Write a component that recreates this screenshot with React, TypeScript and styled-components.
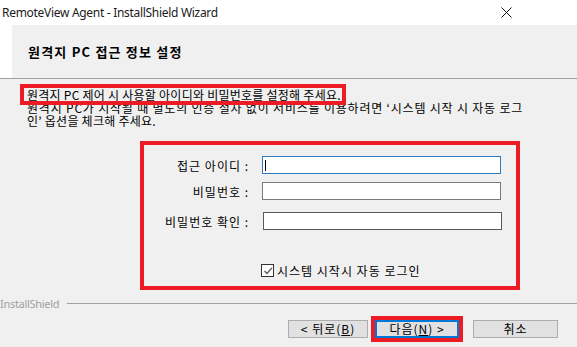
import React from "react";
import styled, { createGlobalStyle } from "styled-components";

const GlobalStyle = createGlobalStyle`
  html, body {
    margin: 0;
    padding: 0;
    width: 577px;
    height: 347px;
    overflow: hidden;
    background: #ffffff;
  }
  * {
    box-sizing: border-box;
  }
`;

const KR = `"Noto Sans CJK KR", "Noto Sans", sans-serif`;

export default function App() {
  return (
    <Window>
      <GlobalStyle />
      <TitleBar>
        <TitleText>RemoteView Agent - InstallShield Wizard</TitleText>
        <CloseButton>
          <svg width="11" height="11" viewBox="0 0 11 11">
            <path d="M0.5 0.5 L10.5 10.5 M10.5 0.5 L0.5 10.5" stroke="#111" strokeWidth="1" />
          </svg>
        </CloseButton>
      </TitleBar>
      <HeaderWrap>
        <HeaderPanel>
          <HeaderTitle>원격지 PC 접근 정보 설정</HeaderTitle>
        </HeaderPanel>
      </HeaderWrap>
      <Body>
        <Intro>
          <Line>원격지 PC 제어 시 사용할 아이디와 비밀번호를 설정해 주세요.</Line>
          <Line $spread={0.8}>
            원격지 PC가 시작될 때 별도의 인증 절차 없이 서비스를 이용하려면 ‘시스템 시작 시 자동 로그
          </Line>
          <Line>인’ 옵션을 체크해 주세요.</Line>
          <Highlight />
        </Intro>
        <FormPanel>
          <FormGrid>
            <Label>접근 아이디 :</Label>
            <Field $border="#2f7bbf">
              <Caret />
            </Field>
            <Label>비밀번호 :</Label>
            <Field $border="#7a7a7a" />
            <Label $drop={4}>비밀번호 확인 :</Label>
            <Field $border="#5a5a5a" $drop={4} $shift={1} />
          </FormGrid>
          <CheckRow>
            <CheckBox>
              <svg width="10" height="10" viewBox="0 0 10 10">
                <path d="M1.5 5 L4 7.5 L8.8 1.8" fill="none" stroke="#555" strokeWidth="1.3" />
              </svg>
            </CheckBox>
            <CheckLabel>시스템 시작시 자동 로그인</CheckLabel>
          </CheckRow>
        </FormPanel>
        <Footer>
          <Brand>InstallShield</Brand>
          <Rule />
        </Footer>
        <ButtonRow>
          <Button $width={80}>&lt; 뒤로(<u>B</u>)</Button>
          <NextOutline>
            <Button $width={84} $primary>
              다음(<u>N</u>) &gt;
            </Button>
          </NextOutline>
          <Button $width={85}>취소</Button>
        </ButtonRow>
      </Body>
    </Window>
  );
}

const Window = styled.div`
  width: 577px;
  height: 347px;
  display: flex;
  flex-direction: column;
  background: #f0f0f0;
  font-family: ${KR};
  font-size: 12px;
  color: #000;
`;

const TitleBar = styled.div`
  height: 25px;
  display: flex;
  align-items: center;
  justify-content: space-between;
  background: #ffffff;
`;

const TitleText = styled.div`
  padding-left: 2px;
  font-family: "Noto Sans", "Open Sans", sans-serif;
  font-size: 12px;
  color: #1a1a1a;
  letter-spacing: -0.3px;
`;

const CloseButton = styled.div`
  width: 40px;
  height: 25px;
  margin-right: 51px;
  display: flex;
  align-items: center;
  justify-content: center;
`;

const HeaderWrap = styled.div`
  background: #ffffff;
  border-bottom: 1px solid #a0a0a0;
`;

const HeaderPanel = styled.div`
  margin-left: 12px;
  height: 53px;
  background: #f0f0f0;
  display: flex;
  align-items: center;
  padding-left: 16px;
`;

const HeaderTitle = styled.div`
  font-weight: bold;
  font-size: 13px;
  letter-spacing: 1.2px;
`;

const Body = styled.div`
  flex: 1;
  display: flex;
  flex-direction: column;
  background: #f0f0f0;
`;

const Intro = styled.div`
  position: relative;
  padding: 9px 0 0 27px;
`;

const Line = styled.div<{ $spread?: number }>`
  height: 13px;
  line-height: 13px;
  white-space: nowrap;
  letter-spacing: ${(p) => p.$spread ?? 0.25}px;
`;

const Highlight = styled.div`
  position: absolute;
  left: 20px;
  top: 5px;
  width: 326px;
  height: 21px;
  border: 4px solid #ed1c24;
`;

const FormPanel = styled.div`
  margin: 14px 0 0 140px;
  width: 380px;
  height: 149px;
  border: 4px solid #ed1c24;
  padding-top: 11px;
`;

const FormGrid = styled.div`
  display: grid;
  grid-template-columns: 105px 240px;
  column-gap: 13px;
  row-gap: 8px;
  align-items: center;
`;

const Label = styled.div<{ $drop?: number }>`
  text-align: right;
  white-space: nowrap;
  letter-spacing: 1px;
  margin-top: ${(p) => p.$drop ?? 0}px;
`;

const Field = styled.div<{ $border: string; $shift?: number; $drop?: number }>`
  position: relative;
  height: 18px;
  width: 239px;
  background: #ffffff;
  border: 1px solid ${(p) => p.$border};
  margin-left: ${(p) => p.$shift ?? 0}px;
  margin-top: ${(p) => p.$drop ?? 0}px;
`;

const Caret = styled.span`
  position: absolute;
  left: 2px;
  top: 3px;
  width: 1px;
  height: 11px;
  background: #000;
`;

const CheckRow = styled.div`
  display: flex;
  align-items: center;
  gap: 3px;
  margin: 32px 0 0 117px;
`;

const CheckBox = styled.div`
  width: 13px;
  height: 13px;
  border: 1px solid #333;
  background: #ffffff;
  display: flex;
  align-items: center;
  justify-content: center;
`;

const CheckLabel = styled.div`
  font-size: 12px;
  letter-spacing: 1px;
`;

const Footer = styled.div`
  display: flex;
  align-items: center;
  margin-top: 6px;
  height: 14px;
`;

const Brand = styled.div`
  font-family: "Noto Sans", "Open Sans", sans-serif;
  font-size: 11px;
  color: #a0a0a0;
  letter-spacing: -0.3px;
`;

const Rule = styled.div`
  flex: 1;
  margin-left: 8px;
  height: 1px;
  background: #a0a0a0;
`;

const ButtonRow = styled.div`
  display: flex;
  align-items: center;
  margin: 6px 0 0 288px;
`;

const NextOutline = styled.div`
  margin-left: 3px;
  margin-right: 10px;
  border: 4px solid #ed1c24;
  display: flex;
`;

const Button = styled.div<{ $width: number; $primary?: boolean }>`
  width: ${(p) => p.$width}px;
  height: 18px;
  background: #e1e1e1;
  border: 1px solid ${(p) => (p.$primary ? "#0078d7" : "#adadad")};
  box-shadow: ${(p) => (p.$primary ? "inset 0 0 0 1px #0078d7" : "none")};
  display: flex;
  align-items: center;
  justify-content: center;
  font-size: 12px;
  letter-spacing: 1px;
  line-height: 1;
  & u {
    text-underline-offset: 1px;
  }
`;
